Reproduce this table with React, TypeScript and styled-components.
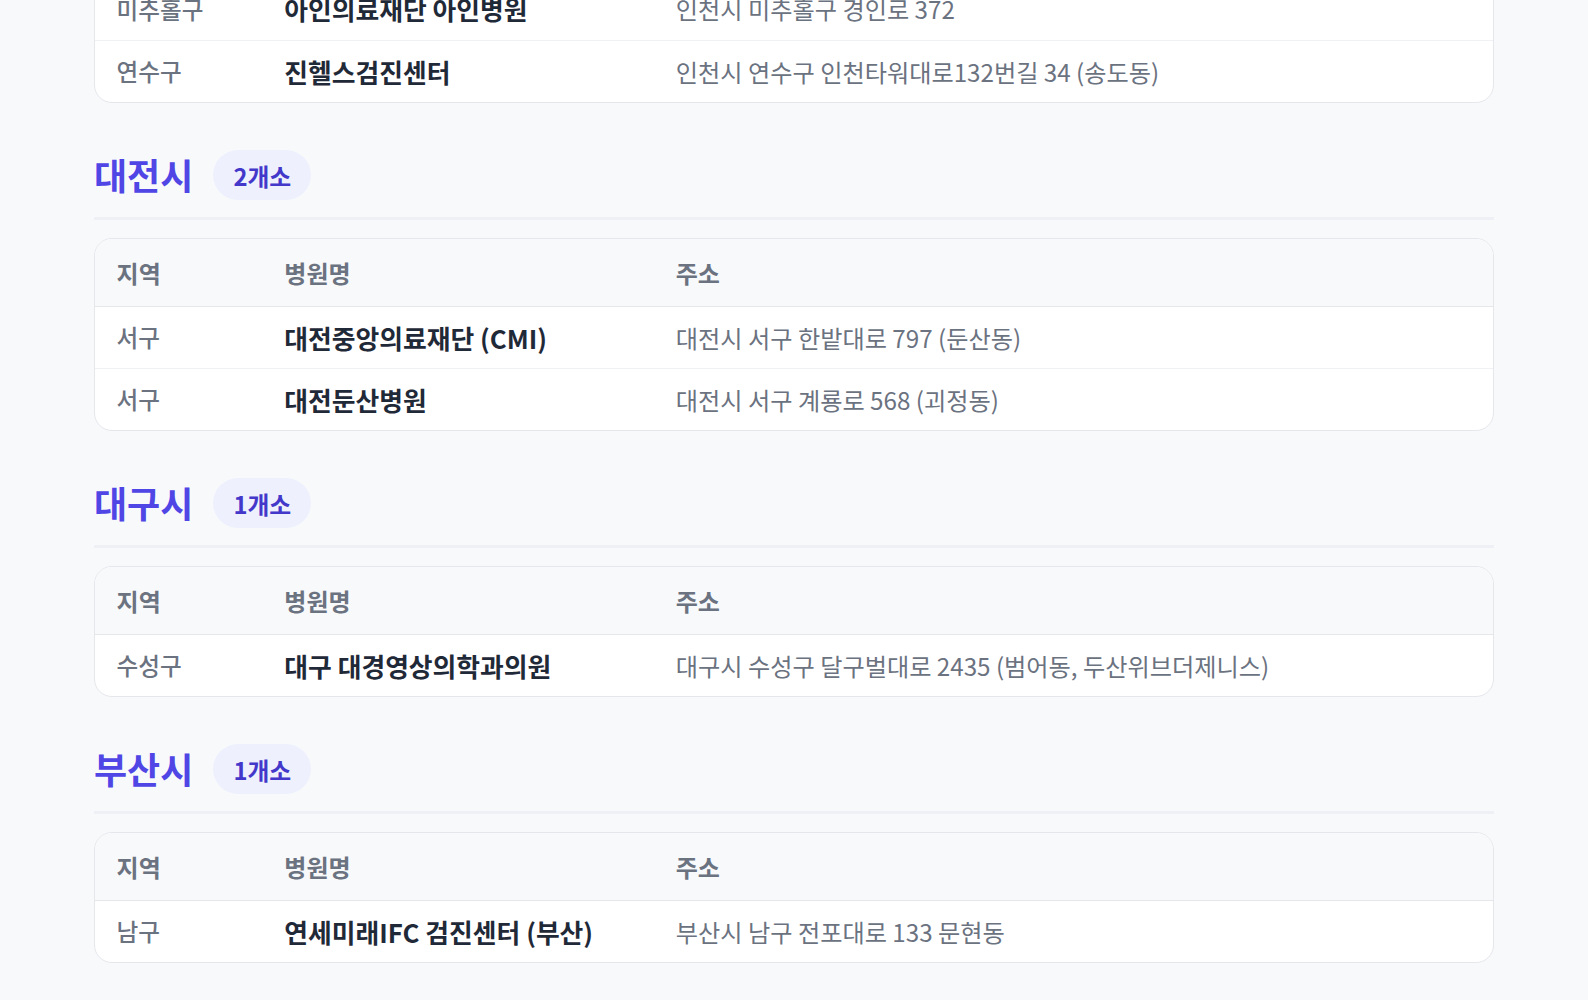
import React from "react";
import styled, { createGlobalStyle } from "styled-components";

const GlobalStyle = createGlobalStyle`
  html, body {
    margin: 0;
    padding: 0;
    background: #f8f9fb;
  }
  body {
    font-family: "Noto Sans CJK KR", "Noto Sans", sans-serif;
    color: #1f2937;
  }
`;

type Hospital = { region: string; name: string; address: string };
type City = { city: string; hospitals: Hospital[] };

const incheonTail: Hospital[] = [
  { region: "미추홀구", name: "아인의료재단 아인병원", address: "인천시 미추홀구 경인로 372" },
  { region: "연수구", name: "진헬스검진센터", address: "인천시 연수구 인천타워대로132번길 34 (송도동)" },
];

const cities: City[] = [
  {
    city: "대전시",
    hospitals: [
      { region: "서구", name: "대전중앙의료재단 (CMI)", address: "대전시 서구 한밭대로 797 (둔산동)" },
      { region: "서구", name: "대전둔산병원", address: "대전시 서구 계룡로 568 (괴정동)" },
    ],
  },
  {
    city: "대구시",
    hospitals: [
      { region: "수성구", name: "대구 대경영상의학과의원", address: "대구시 수성구 달구벌대로 2435 (범어동, 두산위브더제니스)" },
    ],
  },
  {
    city: "부산시",
    hospitals: [
      { region: "남구", name: "연세미래IFC 검진센터 (부산)", address: "부산시 남구 전포대로 133 문현동" },
    ],
  },
];

const Page = styled.main`
  width: 1400px;
  margin: 0 auto;
`;

const Section = styled.section<{ $tail?: boolean }>`
  margin-top: ${(p) => (p.$tail ? "-23px" : "47px")};
`;

const SectionHeader = styled.div`
  display: flex;
  align-items: center;
  gap: 20px;
  padding-bottom: 17px;
  border-bottom: 3px solid #eef0f6;
  margin-bottom: 18px;
`;

const CityTitle = styled.h2`
  margin: 0;
  font-size: 36px;
  font-weight: 700;
  line-height: 1.2;
  color: #4f46e5;
`;

const CountBadge = styled.span`
  display: inline-flex;
  align-items: center;
  height: 50px;
  padding: 0 20px;
  border-radius: 999px;
  background: #eef1fd;
  color: #4338ca;
  font-size: 23.8px;
  font-weight: 700;
  box-sizing: border-box;
`;

const Card = styled.div`
  background: #ffffff;
  border: 1px solid #e5e7eb;
  border-radius: 18px;
  overflow: hidden;
`;

const Table = styled.table`
  width: 100%;
  border-collapse: collapse;
  table-layout: fixed;
`;

const HeadCell = styled.th`
  height: 67px;
  padding: 0 21.6px;
  box-sizing: border-box;
  text-align: left;
  font-size: 24px;
  font-weight: 700;
  color: #6b7280;
  background: #f8f9fb;
  border-bottom: 1px solid #e5e7eb;
`;

const Row = styled.tr`
  & + & td {
    border-top: 1px solid #f0f1f4;
  }
`;

const Cell = styled.td<{ $kind: "region" | "name" | "address" }>`
  height: 62px;
  padding: 0 21.6px;
  box-sizing: border-box;
  vertical-align: middle;
  white-space: nowrap;
  font-size: ${(p) => (p.$kind === "name" ? "25.8px" : p.$kind === "address" ? "24.2px" : "23.6px")};
  font-weight: ${(p) => (p.$kind === "name" ? 700 : p.$kind === "region" ? 500 : 400)};
  color: ${(p) => (p.$kind === "name" ? "#1f2937" : "#6b7280")};
`;

function HospitalRows({ rows }: { rows: Hospital[] }) {
  return (
    <>
      {rows.map((h, i) => (
        <Row key={i}>
          <Cell $kind="region">{h.region}</Cell>
          <Cell $kind="name">{h.name}</Cell>
          <Cell $kind="address">{h.address}</Cell>
        </Row>
      ))}
    </>
  );
}

function ColGroup() {
  return (
    <colgroup>
      <col style={{ width: "12%" }} />
      <col style={{ width: "28%" }} />
      <col style={{ width: "60%" }} />
    </colgroup>
  );
}

export default function App() {
  return (
    <>
      <GlobalStyle />
      <Page>
        <Section $tail>
          <Card>
            <Table>
              <ColGroup />
              <tbody>
                <HospitalRows rows={incheonTail} />
              </tbody>
            </Table>
          </Card>
        </Section>
        {cities.map((c) => (
          <Section key={c.city}>
            <SectionHeader>
              <CityTitle>{c.city}</CityTitle>
              <CountBadge>{c.hospitals.length}개소</CountBadge>
            </SectionHeader>
            <Card>
              <Table>
                <ColGroup />
                <thead>
                  <tr>
                    <HeadCell>지역</HeadCell>
                    <HeadCell>병원명</HeadCell>
                    <HeadCell>주소</HeadCell>
                  </tr>
                </thead>
                <tbody>
                  <HospitalRows rows={c.hospitals} />
                </tbody>
              </Table>
            </Card>
          </Section>
        ))}
      </Page>
    </>
  );
}
